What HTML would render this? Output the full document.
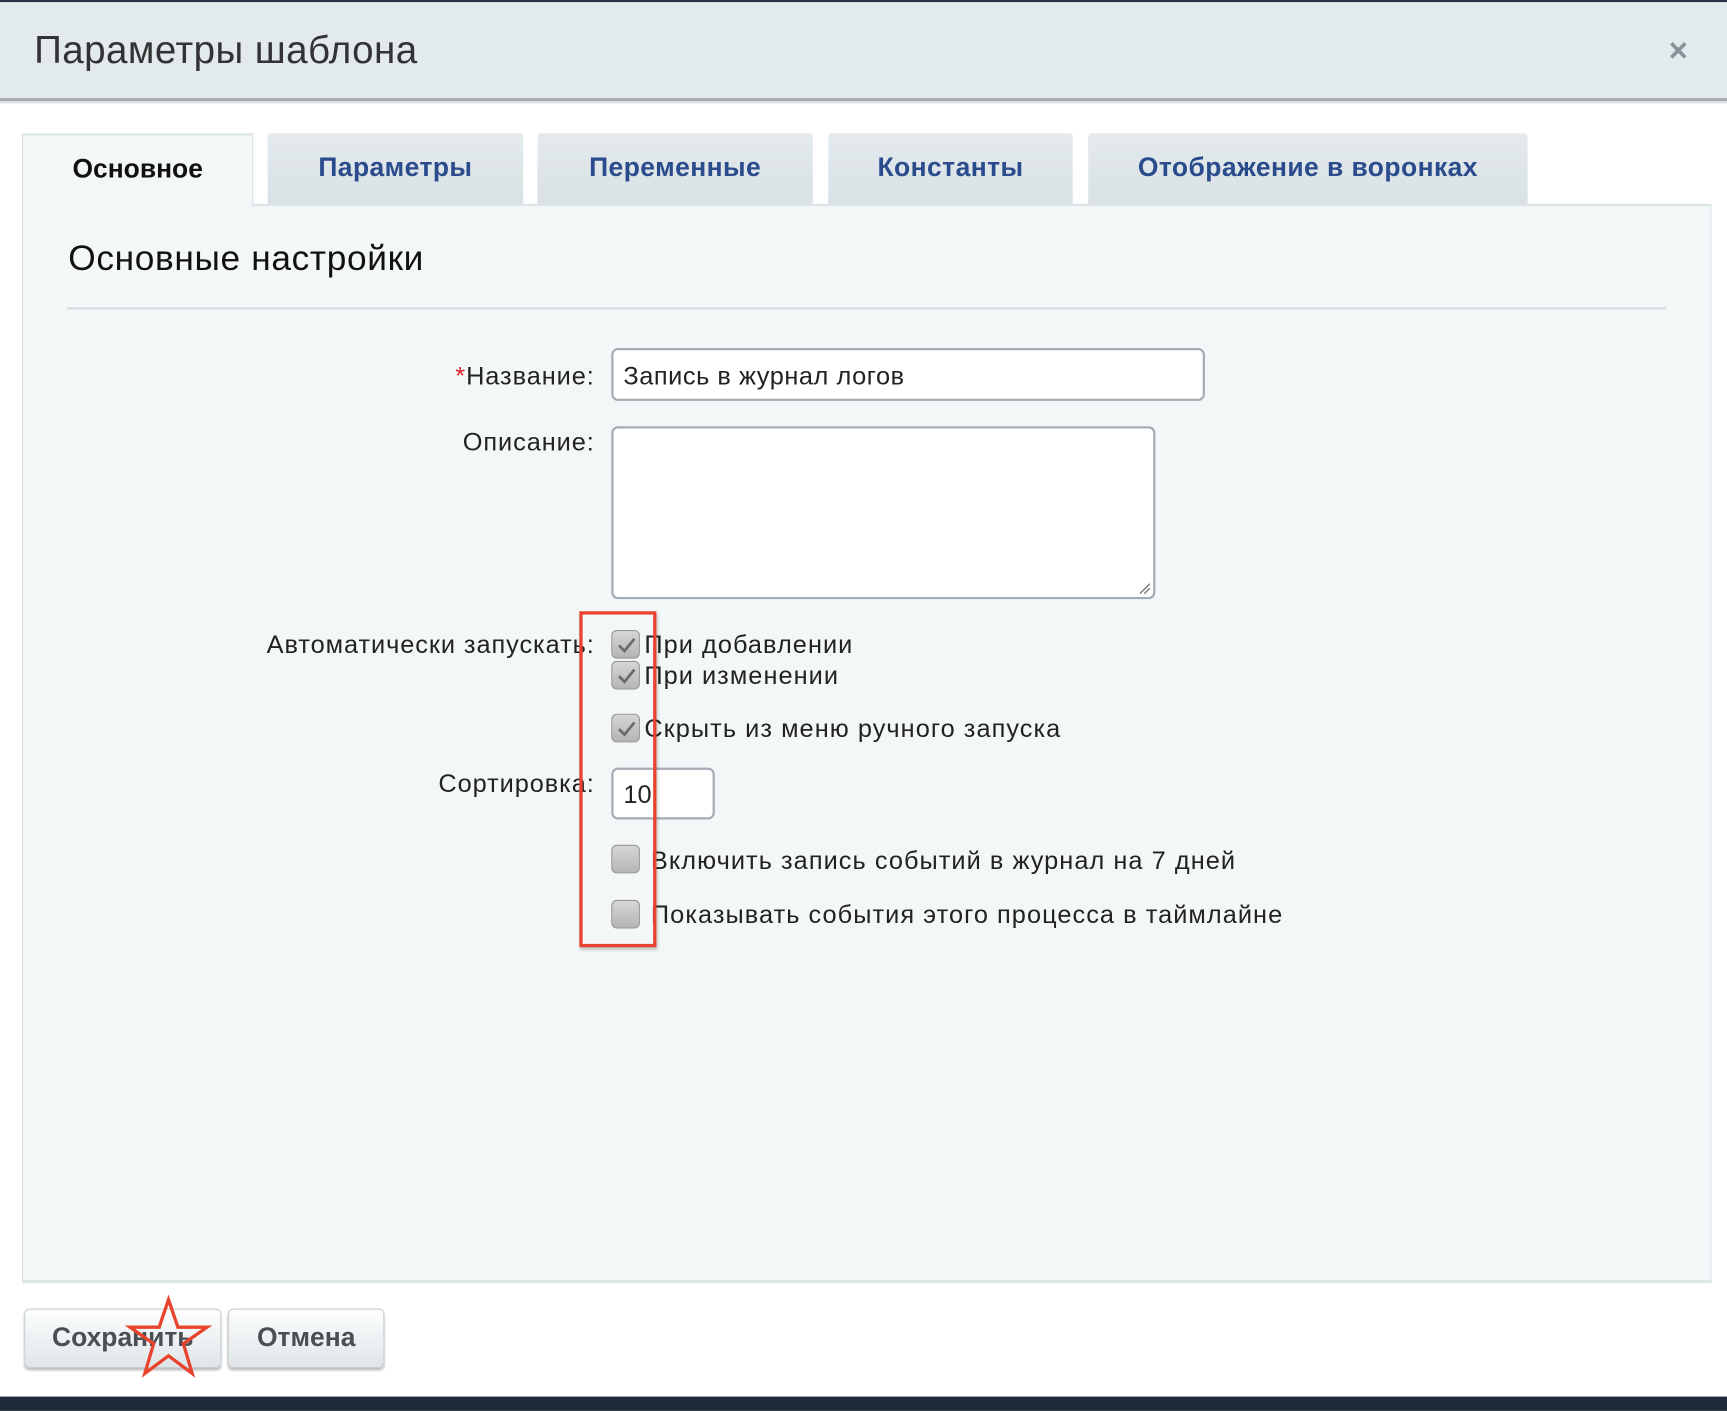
<!DOCTYPE html>
<html><head><meta charset="utf-8">
<style>
html,body{margin:0;padding:0;background:#fff;overflow:hidden;width:1727px;height:1411px}
#w{position:absolute;left:0;top:0;width:1568px;height:1281px;transform:scale(1.10140);transform-origin:0 0;font-family:"Liberation Sans","DejaVu Sans",sans-serif;color:#222}
.a{position:absolute;white-space:nowrap}
.t{position:absolute;top:121px;height:64px;line-height:64px;text-align:center;font-weight:bold;font-size:24px;letter-spacing:.4px;color:#2b4c8c;background:linear-gradient(#e4eaed,#d9e1e5);border-radius:3px 3px 0 0}
.lbl{position:absolute;right:1028px;font-size:23px;line-height:28px;color:#222;letter-spacing:.85px}
.txt{position:absolute;font-size:23px;line-height:28px;color:#222;letter-spacing:.95px}
.cb{position:absolute;left:555px;width:26px;height:26px;border-radius:5px;background:linear-gradient(#d6d6d6,#b5b5b5);border:1px solid #959595;box-sizing:border-box}
.cb svg{position:absolute;left:3px;top:3px}
.in{position:absolute;background:#fff;border:2px solid #a6acb4;border-radius:6px;box-sizing:border-box}
.btn{position:absolute;top:1188px;height:54px;line-height:52px;text-align:center;font-weight:bold;font-size:24px;color:#4a4f55;background:linear-gradient(#fdfefe,#dfe5e8);border:1px solid #c9cfd3;border-radius:5px;box-sizing:border-box;box-shadow:0 2px 2px rgba(0,0,0,.25)}
</style></head><body><div id="w">
<div class="a" style="left:0;top:0;width:1568px;height:2px;background:#2a3345"></div>
<div class="a" style="left:0;top:2px;width:1568px;height:87px;background:#e3eaee"></div>
<div class="a" style="left:0;top:89px;width:1568px;height:3px;background:#a9abad"></div>
<div class="a" style="left:0;top:92px;width:1568px;height:2px;background:#e3e6e8"></div>
<div class="a" style="left:31px;top:26px;font-size:35px;line-height:40px;color:#333;letter-spacing:.4px">Параметры шаблона</div>
<div class="a" style="left:1515px;top:30px;font-size:30px;line-height:34px;color:#8a9299;font-weight:bold">×</div>

<div class="a" style="left:20px;top:185px;width:1532px;height:975px;background:#f4f7f8;border:1px solid #dce5e8;border-top:2px solid #dce5e8;border-bottom:3px solid #dce5e8"></div>
<div class="a" style="left:20px;top:121px;width:210px;height:68px;background:#f4f7f8;border:1px solid #dce5e8;border-bottom:none;border-top:2px solid #dce5e8;box-sizing:border-box;text-align:center;line-height:62px;font-weight:bold;font-size:24px;color:#111">Основное</div>
<div class="t" style="left:243px;width:232px">Параметры</div>
<div class="t" style="left:488px;width:250px">Переменные</div>
<div class="t" style="left:752px;width:222px">Константы</div>
<div class="t" style="left:988px;width:399px">Отображение в воронках</div>

<div class="a" style="left:62px;top:215px;font-size:32px;line-height:38px;color:#111;letter-spacing:.6px">Основные настройки</div>
<div class="a" style="left:61px;top:279px;width:1452px;height:2px;background:#d9dcde"></div>

<div class="lbl" style="top:327px"><span style="color:#e02020">*</span>Название:</div>
<div class="in" style="left:555px;top:316px;width:539px;height:48px"></div>
<div class="txt" style="left:566px;top:327px;letter-spacing:.5px">Запись в журнал логов</div>
<div class="lbl" style="top:387px">Описание:</div>
<div class="in" style="left:555px;top:387px;width:494px;height:157px"><svg style="position:absolute;right:2px;bottom:2px" width="12" height="12"><path d="M2 11L11 2M6 11L11 6" stroke="#777" stroke-width="1.2"/></svg></div>

<div class="lbl" style="top:571px">Автоматически запускать:</div>
<div class="cb" style="top:572px"><svg width="20" height="20"><path d="M3 10l5 5 9-11" fill="none" stroke="#6b6b6b" stroke-width="2.5"/></svg></div>
<div class="txt" style="left:585px;top:571px">При добавлении</div>
<div class="cb" style="top:600px"><svg width="20" height="20"><path d="M3 10l5 5 9-11" fill="none" stroke="#6b6b6b" stroke-width="2.5"/></svg></div>
<div class="txt" style="left:585px;top:599px">При изменении</div>
<div class="cb" style="top:648px"><svg width="20" height="20"><path d="M3 10l5 5 9-11" fill="none" stroke="#6b6b6b" stroke-width="2.5"/></svg></div>
<div class="txt" style="left:585px;top:647px">Скрыть из меню ручного запуска</div>

<div class="lbl" style="top:697px">Сортировка:</div>
<div class="in" style="left:555px;top:697px;width:94px;height:47px"></div>
<div class="txt" style="left:566px;top:707px;letter-spacing:0">10</div>

<div class="cb" style="top:767px"></div>
<div class="txt" style="left:591px;top:767px">Включить запись событий в журнал на 7 дней</div>
<div class="cb" style="top:817px"></div>
<div class="txt" style="left:591px;top:816px">Показывать события этого процесса в таймлайне</div>

<div class="a" style="left:526px;top:555px;width:70px;height:305px;border:3px solid #e8432c;box-sizing:border-box;box-shadow:1px 2px 3px rgba(0,0,0,.25)"></div>

<div class="btn" style="left:22px;width:179px">Сохранить</div>
<div class="btn" style="left:207px;width:142px">Отмена</div>
<svg class="a" style="left:110px;top:1175px" width="90" height="80"><polygon points="43,5 51.5,30 78,30 56.5,45 64.5,72 43,56 21.5,72 29.5,45 8,30 34.5,30" fill="none" stroke="#e8432c" stroke-width="3"/></svg>

<div class="a" style="left:0;top:1268px;width:1568px;height:13px;background:#1f2b3a"></div>
</div></body></html>
